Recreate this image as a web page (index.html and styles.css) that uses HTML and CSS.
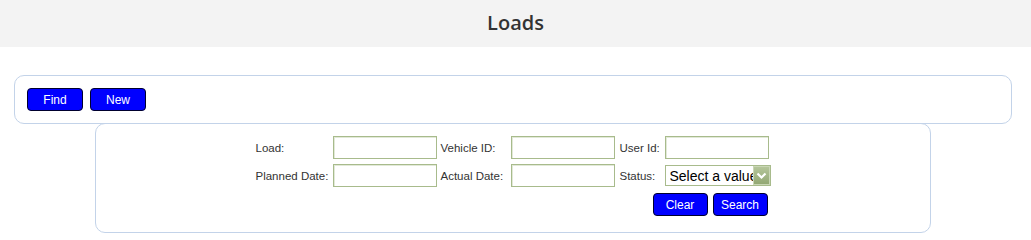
FILE: index.html
```html
<!DOCTYPE html>
<html lang="en">
<head>
  <meta charset="UTF-8">
  <meta name="viewport" content="width=device-width, initial-scale=1.0">
  <title>Loads</title>
  <link rel="stylesheet" href="styles.css">
</head>
<body>
  <div class="page-header">
    <h1>Loads</h1>
  </div>

  <div class="content">
    <div class="toolbar">
      <button class="btn">Find</button>
      <button class="btn">New</button>
    </div>

    <div class="search-panel">
      <div class="search-grid">
        <label for="loadInput">Load:</label>
        <input type="text" id="loadInput">
        <label for="vehicleInput">Vehicle ID:</label>
        <input type="text" id="vehicleInput">
        <label for="userInput">User Id:</label>
        <input type="text" id="userInput">

        <label for="plannedInput">Planned Date:</label>
        <input type="text" id="plannedInput">
        <label for="actualInput">Actual Date:</label>
        <input type="text" id="actualInput">
        <label for="statusSelect">Status:</label>
        <div class="select-wrap">
          <select id="statusSelect">
            <option value="">Select a value</option>
            <option value="open">Open</option>
            <option value="closed">Closed</option>
          </select>
          <span class="select-arrow">
            <svg width="11" height="8" viewBox="0 0 11 8">
              <path d="M1.5 1.5 L5.5 5.5 L9.5 1.5" fill="none" stroke="#fff" stroke-width="2.2"/>
            </svg>
          </span>
        </div>
      </div>
      <div class="search-actions">
        <button class="btn">Clear</button>
        <button class="btn">Search</button>
      </div>
    </div>
  </div>
</body>
</html>
```

FILE: styles.css
```css
body {
  font-family: "Liberation Sans", Arial, sans-serif;
  margin: 0;
  padding: 0;
  background-color: #fff;
  color: #333;
}

.page-header {
  height: 47px;
  background-color: #f3f3f3;
  text-align: center;
}

.page-header h1 {
  margin: 0;
  font-family: "Open Sans", sans-serif;
  font-size: 20px;
  font-weight: 600;
  line-height: 45px;
  color: #333;
}

.content {
  width: 998px;
  margin: 28px 0 0 14px;
}

.toolbar {
  display: flex;
  gap: 7px;
  padding: 12px;
  border: 1px solid #c3d3e9;
  border-radius: 10px;
}

.btn {
  width: 56px;
  height: 23px;
  padding: 1px 0 0;
  font-family: "Liberation Sans", Arial, sans-serif;
  font-size: 12px;
  color: #fff;
  background-color: #0000ff;
  border: 1px solid #00002e;
  border-radius: 4px;
  cursor: pointer;
}

.search-panel {
  width: 834px;
  margin: -1px auto 0;
  padding: 12px 0 16px;
  border: 1px solid #c3d3e9;
  border-radius: 10px;
}

.search-grid {
  display: grid;
  grid-template-columns: 77px 108px 70px 109px 45px 106px;
  row-gap: 5px;
  align-items: center;
  width: 515px;
  margin: 0 auto;
  font-size: 11.5px;
}

.search-grid label {
  color: #333;
}

.search-grid input {
  box-sizing: border-box;
  width: 104px;
  height: 23px;
  padding: 2px 4px;
  font-size: 12px;
  border: 1px solid #a8bb8c;
  box-shadow: inset 1px 1px 0 #e2e9d8;
}

.select-wrap {
  position: relative;
  width: 106px;
  height: 21px;
}

.select-wrap select {
  box-sizing: border-box;
  width: 100%;
  height: 100%;
  padding: 0 0 0 4px;
  font-family: "Liberation Sans", Arial, sans-serif;
  font-size: 14px;
  color: #000;
  background-color: #fff;
  border: 1px solid #a8bb8c;
  border-radius: 0;
  appearance: none;
  -webkit-appearance: none;
}

.select-arrow {
  position: absolute;
  top: 1px;
  right: 1px;
  width: 17px;
  height: 19px;
  display: flex;
  align-items: center;
  justify-content: center;
  background: linear-gradient(#b4c59a, #93a874);
  border: 1px solid #c9d6b5;
  box-sizing: border-box;
}

.search-actions {
  display: flex;
  justify-content: flex-end;
  gap: 5px;
  width: 512px;
  margin: 6px auto 0;
  padding-right: 3px;
}

.search-actions .btn {
  width: 55px;
}
```
